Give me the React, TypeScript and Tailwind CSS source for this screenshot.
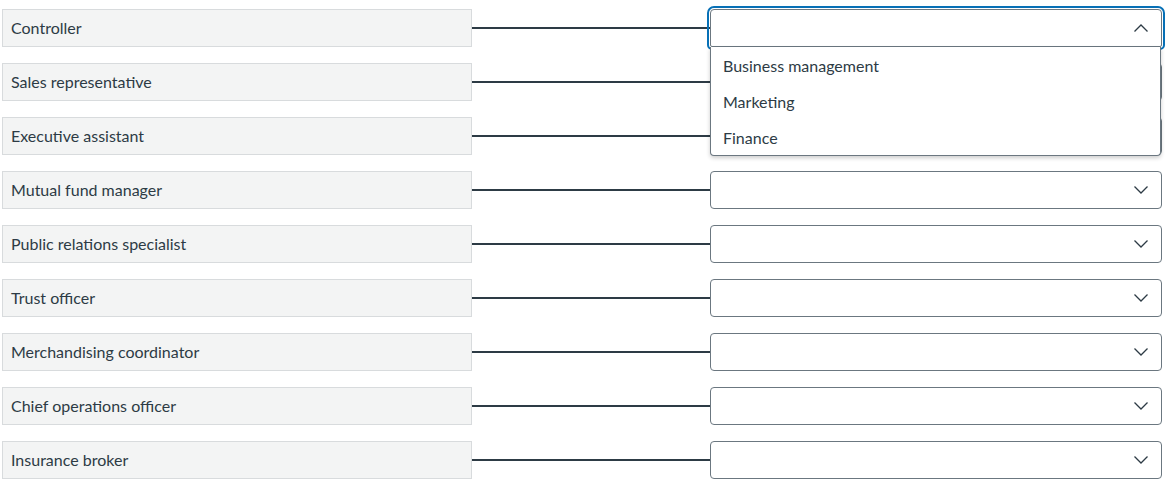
import React from "react";

const labels = [
  "Controller",
  "Sales representative",
  "Executive assistant",
  "Mutual fund manager",
  "Public relations specialist",
  "Trust officer",
  "Merchandising coordinator",
  "Chief operations officer",
  "Insurance broker",
];

const options = ["Business management", "Marketing", "Finance"];

function Chevron({ up }: { up?: boolean }) {
  return (
    <svg width="16" height="10" viewBox="0 0 16 10" className="text-[#2d3b45]">
      {up ? (
        <polyline points="1.5,8.5 8,2 14.5,8.5" fill="none" stroke="currentColor" strokeWidth="1.3" />
      ) : (
        <polyline points="1.5,1.5 8,8 14.5,1.5" fill="none" stroke="currentColor" strokeWidth="1.3" />
      )}
    </svg>
  );
}

export default function App() {
  return (
    <div
      className="w-[1172px] h-[485px] bg-white pt-[9px] pl-[2px] flex flex-col gap-4 text-[#2d3b45]"
      style={{ fontFamily: "Lato, 'Liberation Sans', sans-serif" }}
    >
      {labels.map((label, i) => (
        <div key={label} className="flex items-center h-[38px]">
          <div className="w-[470px] h-[38px] flex items-center px-[8px] bg-[#f3f4f4] border border-[#d8dbdd] text-[16px]">
            {label}
          </div>
          <div className="w-[238px] h-[2px] bg-[#2d3b45]" />
          <div className="relative w-[452px] h-[38px]">
            <div
              className={
                "w-full h-full border border-[#6b7780] flex items-center justify-end pr-[12px] " +
                (i === 0
                  ? "rounded-t-[4px] outline outline-2 outline-offset-1 outline-[#0770b6] rounded-b-[2px]"
                  : "rounded-[4px]")
              }
            >
              <Chevron up={i === 0} />
            </div>
            {i === 0 && (
              <div className="absolute left-0 top-[38px] w-[451px] h-[109px] bg-white border border-t-0 border-[#6b7780] rounded-b-[4px] shadow-[0_2px_4px_rgba(0,0,0,0.2)] z-10 py-[1px]">
                {options.map((o) => (
                  <div key={o} className="h-[36px] flex items-center pl-[12px] text-[16px]">
                    {o}
                  </div>
                ))}
              </div>
            )}
          </div>
        </div>
      ))}
    </div>
  );
}
